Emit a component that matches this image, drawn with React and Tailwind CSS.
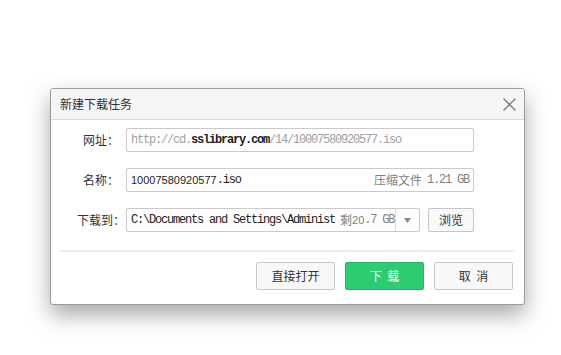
import React from "react";

function Label({ children }) {
  return (
    <div className="w-[50px] shrink-0 text-center text-[12px] text-[#333] font-['Noto_Sans_CJK_SC',sans-serif]">
      {children}
    </div>
  );
}

const mono = "font-['Liberation_Mono','Noto_Sans_CJK_SC',monospace] text-[12px] tracking-[-1.2px]";
const sans = "font-['Liberation_Sans','Noto_Sans_CJK_SC',sans-serif] text-[11px]";

export default function App() {
  return (
    <div className="min-h-screen bg-white pt-[88px] pl-[50px]">
      <div className="w-[475px] h-[217px] border border-[#9c9c9c] rounded-[3px] bg-white shadow-[0_10px_22px_rgba(0,0,0,0.34)] flex flex-col overflow-hidden">
        <div className="h-[31px] shrink-0 bg-[#f5f5f5] border-b border-[#dcdcdc] flex items-center justify-between pl-[9px] pr-[8px]">
          <span className="text-[12px] text-[#333] font-['Noto_Sans_CJK_SC',sans-serif]">新建下载任务</span>
          <svg width="13" height="13" viewBox="0 0 13 13" className="mt-[1px]">
            <path d="M0.5 0.5 L12.5 12.5 M12.5 0.5 L0.5 12.5" stroke="#7a7a7a" strokeWidth="1.3" fill="none" />
          </svg>
        </div>

        <div className="pt-[8px] pl-[25px] flex flex-col gap-[16px]">
          <div className="flex items-center h-[24px]">
            <Label>网址：</Label>
            <div className="w-[348px] h-[24px] border border-[#c9c9cf] rounded-[2px] flex items-center px-[4px] overflow-hidden whitespace-nowrap">
              <span className={`${mono} text-[#a0a0a0]`}>http://cd.</span>
              <span className={`${mono} text-[#222] font-bold`}>sslibrary.com</span>
              <span className={`${mono} text-[#a0a0a0]`}>/14/10007580920577.iso</span>
            </div>
          </div>

          <div className="flex items-center h-[24px]">
            <Label>名称：</Label>
            <div className="w-[348px] h-[24px] border border-[#c9c9cf] rounded-[2px] flex items-center justify-between px-[4px] overflow-hidden whitespace-nowrap">
              <span className="flex items-center">
                <span className={`${sans} text-[#222]`}>10007580920577</span>
                <span className={`${mono} text-[#222]`}>.iso</span>
              </span>
              <span className="flex items-center text-[#808080]">
                <span className="text-[12px] font-['Noto_Sans_CJK_SC',sans-serif] mr-[5px]">压缩文件</span>
                <span className={`${mono}`}>1.21 GB</span>
              </span>
            </div>
          </div>

          <div className="flex items-center h-[24px]">
            <Label>下载到：</Label>
            <div className="w-[294px] h-[24px] border border-[#c9c9cf] rounded-[2px] flex items-stretch overflow-hidden whitespace-nowrap">
              <div className="flex-1 flex items-center pl-[4px] pr-[2px] overflow-hidden">
                <span className={`${mono} text-[#222]`}>C:\Documents and Settings\Administ</span>
                <span className="flex items-center text-[#808080] ml-[5px]">
                  <span className="text-[12px] font-['Noto_Sans_CJK_SC',sans-serif]">剩</span>
                  <span className={sans}>20</span>
                  <span className={mono}>.7 GB</span>
                </span>
              </div>
              <div className="w-[24px] shrink-0 border-l border-[#dcdcdc] flex items-center justify-center">
                <svg width="7" height="5" viewBox="0 0 7 5">
                  <path d="M0 0 L7 0 L3.5 5 Z" fill="#8a8a8a" />
                </svg>
              </div>
            </div>
            <button className="ml-[8px] w-[46px] h-[24px] border border-[#c6c6c6] rounded-[2px] bg-[#f8f8f8] text-[12px] text-[#333] font-['Noto_Sans_CJK_SC',sans-serif] flex items-center justify-center">
              浏览
            </button>
          </div>
        </div>

        <div className="mt-[18px] mx-[9px] h-[2px] bg-[#ececec] shrink-0" />

        <div className="mt-[10px] flex justify-end gap-[10px] pr-[11px]">
          <button className="w-[79px] h-[28px] border border-[#c8c8c8] rounded-[2px] bg-[#f8f8f8] text-[12px] text-[#333] font-['Noto_Sans_CJK_SC',sans-serif] flex items-center justify-center">
            直接打开
          </button>
          <button className="w-[79px] h-[28px] border border-[#25b462] rounded-[2px] bg-[#2ecc71] text-[12px] text-white font-['Noto_Sans_CJK_SC',sans-serif] flex items-center justify-center whitespace-pre">
            下  载
          </button>
          <button className="w-[79px] h-[28px] border border-[#c8c8c8] rounded-[2px] bg-[#f8f8f8] text-[12px] text-[#333] font-['Noto_Sans_CJK_SC',sans-serif] flex items-center justify-center whitespace-pre">
            取  消
          </button>
        </div>
      </div>
    </div>
  );
}
